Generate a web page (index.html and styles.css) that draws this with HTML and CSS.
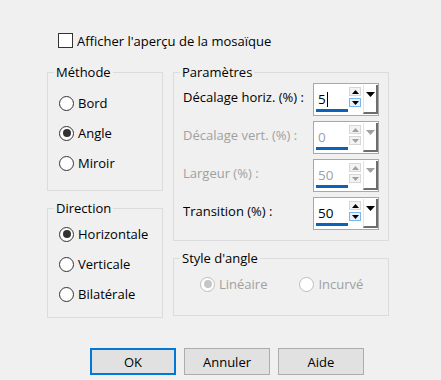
FILE: index.html
```html
<!DOCTYPE html>
<html>
<head>
    <title>Mosaïque</title>
    <link rel="stylesheet" href="styles.css">
</head>
<body>
<div class="dialog">
    <div class="check-row">
        <span class="checkbox"></span>
        <span>Afficher l'aperçu de la mosaïque</span>
    </div>

    <div class="panes">
        <div class="col">
            <div class="group group-method">
                <div class="group-title">Méthode</div>
                <div class="radio-list">
                    <div class="radio-row"><span class="radio"></span>Bord</div>
                    <div class="radio-row"><span class="radio checked"></span>Angle</div>
                    <div class="radio-row"><span class="radio"></span>Miroir</div>
                </div>
            </div>
            <div class="group group-direction">
                <div class="group-title">Direction</div>
                <div class="radio-list">
                    <div class="radio-row"><span class="radio checked"></span>Horizontale</div>
                    <div class="radio-row"><span class="radio"></span>Verticale</div>
                    <div class="radio-row"><span class="radio"></span>Bilatérale</div>
                </div>
            </div>
        </div>

        <div class="col">
            <div class="group group-params">
                <div class="group-title">Paramètres</div>
                <div class="param-list">
                    <div class="param-row">
                        <span class="param-label">Décalage horiz. (%) :</span>
                        <div class="spin">
                            <div class="spin-field">5<span class="caret"></span></div>
                            <div class="spin-arrows">
                                <span class="arrow-btn"><svg width="7" height="4" viewBox="0 0 7 4"><path d="M0 4 L3.5 0 L7 4 Z"/></svg></span>
                                <span class="arrow-btn hot"><svg width="7" height="4" viewBox="0 0 7 4"><path d="M0 0 L7 0 L3.5 4 Z"/></svg></span>
                            </div>
                            <div class="spin-drop"><svg width="9" height="5" viewBox="0 0 9 5"><path d="M0 0 L9 0 L4.5 5 Z"/></svg></div>
                        </div>
                    </div>
                    <div class="param-row disabled">
                        <span class="param-label">Décalage vert. (%) :</span>
                        <div class="spin">
                            <div class="spin-field">0</div>
                            <div class="spin-arrows">
                                <span class="arrow-btn"><svg width="7" height="4" viewBox="0 0 7 4"><path d="M0 4 L3.5 0 L7 4 Z"/></svg></span>
                                <span class="arrow-btn"><svg width="7" height="4" viewBox="0 0 7 4"><path d="M0 0 L7 0 L3.5 4 Z"/></svg></span>
                            </div>
                            <div class="spin-drop"><svg width="9" height="5" viewBox="0 0 9 5"><path d="M0 0 L9 0 L4.5 5 Z"/></svg></div>
                        </div>
                    </div>
                    <div class="param-row disabled">
                        <span class="param-label">Largeur (%) :</span>
                        <div class="spin">
                            <div class="spin-field">50</div>
                            <div class="spin-arrows">
                                <span class="arrow-btn"><svg width="7" height="4" viewBox="0 0 7 4"><path d="M0 4 L3.5 0 L7 4 Z"/></svg></span>
                                <span class="arrow-btn"><svg width="7" height="4" viewBox="0 0 7 4"><path d="M0 0 L7 0 L3.5 4 Z"/></svg></span>
                            </div>
                            <div class="spin-drop"><svg width="9" height="5" viewBox="0 0 9 5"><path d="M0 0 L9 0 L4.5 5 Z"/></svg></div>
                        </div>
                    </div>
                    <div class="param-row">
                        <span class="param-label">Transition (%) :</span>
                        <div class="spin">
                            <div class="spin-field">50</div>
                            <div class="spin-arrows">
                                <span class="arrow-btn"><svg width="7" height="4" viewBox="0 0 7 4"><path d="M0 4 L3.5 0 L7 4 Z"/></svg></span>
                                <span class="arrow-btn hot"><svg width="7" height="4" viewBox="0 0 7 4"><path d="M0 0 L7 0 L3.5 4 Z"/></svg></span>
                            </div>
                            <div class="spin-drop"><svg width="9" height="5" viewBox="0 0 9 5"><path d="M0 0 L9 0 L4.5 5 Z"/></svg></div>
                        </div>
                    </div>
                </div>
            </div>
            <div class="group group-style">
                <div class="group-title">Style d'angle</div>
                <div class="style-row">
                    <div class="radio-row disabled"><span class="radio checked"></span>Linéaire</div>
                    <div class="radio-row disabled"><span class="radio"></span>Incurvé</div>
                </div>
            </div>
        </div>
    </div>

    <div class="buttons">
        <button class="btn default">OK</button>
        <button class="btn">Annuler</button>
        <button class="btn">Aide</button>
    </div>
</div>
</body>
</html>
```

FILE: styles.css
```css
body {
    margin: 0;
    background-color: #f0f0f0;
    font-family: 'Open Sans', 'Noto Sans', sans-serif;
    font-size: 13px;
    color: #000;
}
.dialog {
    padding: 33px 0 0 47px;
}
.check-row {
    display: flex;
    align-items: center;
    gap: 4px;
    margin-left: 11px;
    height: 15px;
}
.checkbox {
    width: 13px;
    height: 13px;
    border: 1px solid #333;
    background-color: #fff;
}
.panes {
    display: grid;
    grid-template-columns: 116px 216px;
    column-gap: 10px;
    margin-top: 24px;
}
.col {
    display: flex;
    flex-direction: column;
}
.group {
    border: 1px solid #dcdcdc;
    box-sizing: border-box;
}
.group-title {
    width: max-content;
    margin: -9px 0 0 6px;
    padding: 0 2px;
    line-height: 16px;
    background-color: #f0f0f0;
}
.group-method {
    height: 119px;
}
.group-direction {
    height: 110px;
    margin-top: 17px;
}
.group-params {
    height: 169px;
}
.group-style {
    height: 58px;
    margin-top: 17px;
}
.radio-list {
    padding: 8px 0 0 11px;
}
.group-direction .radio-list {
    padding-top: 3px;
}
.radio-row {
    display: flex;
    align-items: center;
    gap: 4px;
    height: 30px;
}
.radio {
    width: 13px;
    height: 13px;
    border: 1px solid #333;
    border-radius: 50%;
    background-color: #fff;
    display: flex;
    align-items: center;
    justify-content: center;
}
.radio.checked::after {
    content: "";
    width: 8px;
    height: 8px;
    border-radius: 50%;
    background-color: #333;
}
.radio-row.disabled {
    color: #a0a0a0;
}
.radio-row.disabled .radio {
    border-color: #bcbcbc;
}
.radio-row.disabled .radio.checked::after {
    background-color: #c6c6c6;
}
.style-row {
    display: flex;
    gap: 32px;
    padding: 3px 0 0 26px;
}
.param-list {
    display: flex;
    flex-direction: column;
    gap: 5px;
    padding: 3px 9px 0 9px;
}
.param-row {
    display: flex;
    align-items: center;
    justify-content: space-between;
    height: 33px;
}
.param-label {
    margin-top: -6px;
}
.param-row.disabled {
    color: #a0a0a0;
}
.spin {
    width: 66px;
    height: 33px;
    box-sizing: border-box;
    border: 1px solid #a8a8a8;
    background-color: #fff;
    display: flex;
}
.spin-field {
    width: 33px;
    margin-left: 2px;
    padding-left: 2px;
    padding-top: 6px;
    box-sizing: border-box;
    border-bottom: 3px solid #0a63b9;
    height: 28px;
    line-height: 18px;
    font-size: 13.5px;
}
.caret {
    display: inline-block;
    width: 1px;
    height: 15px;
    background-color: #000;
    vertical-align: -3px;
    margin-left: 1px;
}
.spin-arrows {
    display: flex;
    flex-direction: column;
    gap: 2px;
    margin: 3px 0 0 1px;
}
.arrow-btn {
    width: 12px;
    height: 9px;
    box-sizing: border-box;
    border: 1px solid #d6d6d6;
    background-color: #f3f3f3;
    display: flex;
    align-items: center;
    justify-content: center;
}
.arrow-btn.hot {
    border-color: #7eb4ea;
    background-color: #e5f1fb;
}
.arrow-btn svg {
    fill: #000;
}
.disabled .arrow-btn svg,
.disabled .spin-drop svg {
    fill: #a0a0a0;
}
.spin-drop {
    width: 15px;
    margin: 1px 0 1px 2px;
    box-sizing: border-box;
    border-left: 1px solid #e3e3e3;
    border-right: 2px solid #6d6d6d;
    border-bottom: 2px solid #6d6d6d;
    display: flex;
    justify-content: center;
    padding-top: 7px;
}
.spin-drop svg {
    fill: #000;
}
.buttons {
    display: flex;
    gap: 8px;
    margin: 30px 0 0 43px;
}
.btn {
    width: 86px;
    height: 27px;
    box-sizing: border-box;
    border: 1px solid #adadad;
    background-color: #e1e1e1;
    font-family: inherit;
    font-size: 13px;
    color: #000;
    padding: 0;
}
.btn.default {
    border: 2px solid #0078d7;
}
```
